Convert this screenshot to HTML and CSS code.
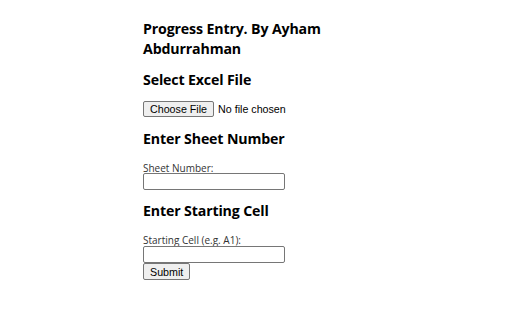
FILE: index.html
```html
<!DOCTYPE html>
<html lang="en">
<head>
<meta charset="utf-8">
<title>Progress Entry</title>
<link rel="stylesheet" href="styles.css">
</head>
<body>
<main class="page">
  <h2 class="title">Progress Entry. By Ayham Abdurrahman</h2>
  <h3 class="section-title">Select Excel File</h3>
  <div class="file-row">
    <input class="file-input" type="file" accept=".xlsx,.xls">
  </div>
  <h3 class="section-title sheet-title">Enter Sheet Number</h3>
  <label class="field-label sheet-label" for="sheet">Sheet Number:</label>
  <input class="text-input" id="sheet" type="text">
  <h3 class="section-title cell-title">Enter Starting Cell</h3>
  <label class="field-label cell-label" for="cell">Starting Cell (e.g. A1):</label>
  <input class="text-input" id="cell" type="text">
  <button class="submit-btn" type="button">Submit</button>
</main>
</body>
</html>
```
FILE: styles.css
```css
html, body {
  margin: 0;
  background: #ffffff;
}
body {
  font-family: "Open Sans", "Noto Sans", sans-serif;
  color: #000000;
}
.page {
  width: 226px;
  margin: 0 auto;
  padding-top: 19px;
  display: flex;
  flex-direction: column;
  align-items: flex-start;
}
.title,
.section-title {
  margin: 0;
  font-size: 14.2px;
  font-weight: 700;
  line-height: 20px;
  letter-spacing: -0.15px;
}
.section-title {
  margin-top: 11px;
}
.file-row {
  margin-top: 11px;
  height: 16px;
  display: flex;
  align-items: center;
}
.file-input {
  font-family: "Liberation Sans", Arial, sans-serif;
  font-size: 10.7px;
  color: #000;
  margin: 0;
  padding: 0;
  height: 16px;
}
.file-input::file-selector-button {
  box-sizing: border-box;
  font-family: "Liberation Sans", Arial, sans-serif;
  font-size: 10.7px;
  height: 16px;
  padding: 0 6px;
  margin: 0 4px 0 0;
  border: 1px solid #767676;
  border-radius: 2px;
  background: #efefef;
  color: #000;
}
.sheet-title {
  margin-top: 12px;
}
.field-label {
  display: block;
  font-size: 10px;
  line-height: 10px;
  color: #333333;
}
.sheet-label {
  margin-top: 14px;
}
.cell-title {
  margin-top: 11px;
}
.cell-label {
  margin-top: 14px;
  margin-bottom: 1px;
}
.text-input {
  box-sizing: border-box;
  width: 142px;
  height: 17px;
  margin: 0;
  padding: 0 2px;
  border: 1px solid #767676;
  border-radius: 2px;
  background: #fff;
  font-family: "Liberation Sans", Arial, sans-serif;
  font-size: 10.7px;
}
.submit-btn {
  box-sizing: border-box;
  height: 17px;
  margin: 0;
  padding: 0 6px;
  border: 1px solid #767676;
  border-radius: 2px;
  background: #efefef;
  color: #000;
  font-family: "Liberation Sans", Arial, sans-serif;
  font-size: 10.7px;
  line-height: 14px;
}
```
